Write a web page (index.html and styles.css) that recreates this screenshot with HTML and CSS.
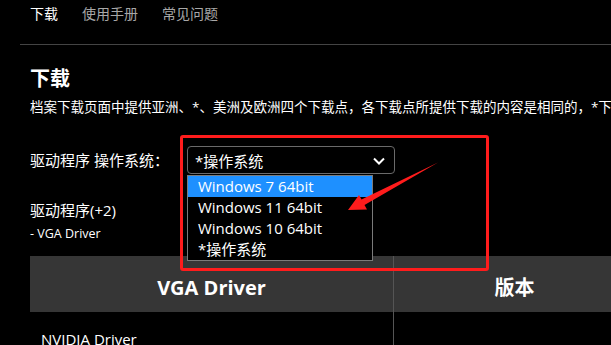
FILE: index.html
```html
<!DOCTYPE html>
<html>
	<head>
		<meta charset="utf-8">
		<link rel="stylesheet" href="styles.css">
	</head>
	<body>
		<div class="page">
			<nav class="tabs">
				<a class="tab active">下载</a>
				<a class="tab">使用手册</a>
				<a class="tab">常见问题</a>
			</nav>
			<main class="continut">
				<h1 class="titlu">下载</h1>
				<p class="intro">档案下载页面中提供亚洲、*、美洲及欧洲四个下载点，各下载点所提供下载的内容是相同的，*下载点的下载速度较快。</p>
				<div class="os-row">
					<span class="os-label">驱动程序 操作系统：</span>
					<div class="select">
						<div class="select-box">
							<span>*操作系统</span>
							<svg class="chevron" width="12" height="8" viewBox="0 0 12 8"><path d="M1 1.5 L6 6.5 L11 1.5" fill="none" stroke="#fff" stroke-width="2"/></svg>
						</div>
						<ul class="options">
							<li class="option selected">Windows 7 64bit</li>
							<li class="option">Windows 11 64bit</li>
							<li class="option">Windows 10 64bit</li>
							<li class="option">*操作系统</li>
						</ul>
					</div>
				</div>
				<div class="grup">驱动程序(+2)</div>
				<div class="grup-sub">- VGA Driver</div>
				<table class="date">
					<thead>
						<tr><th class="col-nume">VGA Driver</th><th class="col-ver">版本</th></tr>
					</thead>
					<tbody>
						<tr><td>NVIDIA Driver</td><td></td></tr>
					</tbody>
				</table>
			</main>
			<div class="marcaj"></div>
			<svg class="sageata" width="611" height="345" viewBox="0 0 611 345">
				<polygon points="348,210 359,195 361.5,199.5 438,162.5 364.5,205 367,209.5" fill="#ff1c1c"/>
			</svg>
		</div>
	</body>
</html>
```

FILE: styles.css
```css
html, body{
	margin: 0;
	background-color: #000;
	overflow: hidden;
}
.page{
	position: relative;
	width: 611px;
	height: 345px;
	overflow: hidden;
	color: #fff;
	font-family: "Open Sans", "Noto Sans CJK SC", sans-serif;
}
.tabs{
	display: flex;
	gap: 24px;
	margin-left: 20px;
	padding: 4px 0 20px 10px;
	border-bottom: 1px solid #444;
	width: 900px;
}
.tab{
	font-size: 14px;
	line-height: 20px;
	color: #a8a8a8;
}
.tab.active{
	color: #fff;
}
.continut{
	padding-left: 30px;
}
.titlu{
	margin: 21px 0 0;
	font-size: 20px;
	line-height: 26px;
	font-weight: bold;
}
.intro{
	margin: 6px 0 0;
	font-size: 13.5px;
	line-height: 18px;
	white-space: nowrap;
}
.os-row{
	display: flex;
	align-items: center;
	gap: 18px;
	margin-top: 30px;
	height: 28px;
}
.os-label{
	font-size: 15px;
	line-height: 22px;
}
.select{
	position: relative;
}
.select-box{
	box-sizing: border-box;
	width: 208px;
	height: 28px;
	border: 1px solid #6a6a6a;
	border-radius: 4px;
	display: flex;
	align-items: center;
	justify-content: space-between;
	padding: 0 9px 0 7px;
	font-size: 15px;
}
.chevron{
	margin-top: 1px;
}
.options{
	position: absolute;
	left: 0;
	top: 29px;
	z-index: 2;
	box-sizing: border-box;
	width: 186px;
	margin: 0;
	padding: 0;
	list-style: none;
	background-color: #000;
	border: 1px solid #7a7a7a;
}
.option{
	height: 21px;
	line-height: 21px;
	padding-left: 10px;
	font-size: 15px;
}
.option.selected{
	background-color: #1e90ff;
}
.grup{
	margin-top: 25px;
	font-size: 15px;
	line-height: 22px;
}
.grup-sub{
	margin-top: 4px;
	font-size: 12.5px;
	line-height: 18px;
}
.date{
	margin-top: 13px;
	border-collapse: collapse;
	width: 605px;
}
.date th{
	background-color: #363636;
	padding: 22px 0 14px;
	line-height: 20px;
	font-size: 20px;
	font-weight: bold;
	text-align: center;
}
.col-nume{
	width: 363px;
}
.date td{
	padding: 16px 11px 0;
	font-size: 15px;
	line-height: 22px;
	vertical-align: top;
}
.date th + th, .date td + td{
	border-left: 1px solid #555;
}
.marcaj{
	position: absolute;
	left: 180px;
	top: 135px;
	width: 303px;
	height: 130px;
	border: 3px solid #ff1c1c;
	border-radius: 3px;
	z-index: 3;
}
.sageata{
	position: absolute;
	left: 0;
	top: 0;
	z-index: 4;
}
```
